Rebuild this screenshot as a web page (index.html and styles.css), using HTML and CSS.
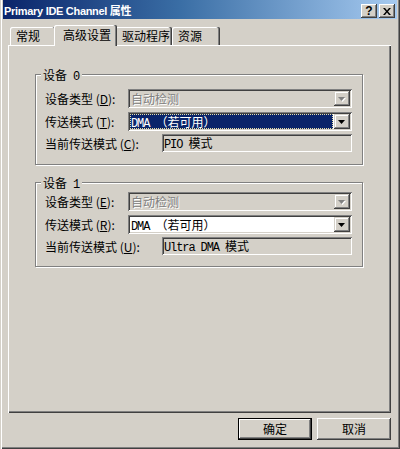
FILE: index.html
```html
<!DOCTYPE html>
<html lang="zh-CN">
<head>
<meta charset="utf-8">
<title>Primary IDE Channel 属性</title>
<link rel="stylesheet" href="styles.css">
</head>
<body>
<div class="window">
  <div class="titlebar">
    <span class="title">Primary IDE Channel 属性</span>
    <span class="tbtn help">?</span>
    <span class="tbtn close"><svg width="8" height="7" viewBox="0 0 8 7"><path d="M0 0h2l2 2.4L6 0h2L5 3.5 8 7H6L4 4.6 2 7H0l3-3.5z"/></svg></span>
  </div>
  <div class="client">
    <div class="tabs">
      <div class="tab t1">常规</div>
      <div class="tab t2 active">高级设置</div>
      <div class="tab t3">驱动程序</div>
      <div class="tab t4">资源</div>
    </div>
    <div class="panel">
      <div class="group g0">
        <div class="legend">设备<span class="m"> 0</span></div>
        <div class="row first">
          <span class="label">设备类型 (<u>D</u>):</span>
          <div class="combo disabled"><span class="val">自动检测</span><span class="drop"><svg width="8" height="5" viewBox="0 0 8 5"><path class="sh" d="M1 1h7L4.5 5z"/><path class="tri" d="M0 0h7L3.5 4z"/></svg></span></div>
        </div>
        <div class="row">
          <span class="label">传送模式 (<u>T</u>):</span>
          <div class="combo"><span class="val sel"><span class="m">DMA </span>（若可用）</span><span class="drop"><svg width="8" height="5" viewBox="0 0 8 5"><path class="tri" d="M0 0h7L3.5 4z"/></svg></span></div>
        </div>
        <div class="row srow">
          <span class="label wide">当前传送模式 (<u>C</u>):</span>
          <div class="static"><span class="m">PIO </span>模式</div>
        </div>
      </div>
      <div class="group g1">
        <div class="legend">设备<span class="m"> 1</span></div>
        <div class="row first">
          <span class="label">设备类型 (<u>E</u>):</span>
          <div class="combo disabled"><span class="val">自动检测</span><span class="drop"><svg width="8" height="5" viewBox="0 0 8 5"><path class="sh" d="M1 1h7L4.5 5z"/><path class="tri" d="M0 0h7L3.5 4z"/></svg></span></div>
        </div>
        <div class="row">
          <span class="label">传送模式 (<u>R</u>):</span>
          <div class="combo"><span class="val"><span class="m">DMA </span>（若可用）</span><span class="drop"><svg width="8" height="5" viewBox="0 0 8 5"><path class="tri" d="M0 0h7L3.5 4z"/></svg></span></div>
        </div>
        <div class="row srow">
          <span class="label wide">当前传送模式 (<u>U</u>):</span>
          <div class="static"><span class="m">Ultra DMA </span>模式</div>
        </div>
      </div>
    </div>
    <div class="buttons">
      <div class="btn default">确定</div>
      <div class="btn">取消</div>
    </div>
  </div>
</div>
</body>
</html>
```
FILE: styles.css
```css
* { box-sizing: border-box; }

body {
  margin: 0;
  background: #d4d0c8;
  font-family: "Noto Sans CJK SC", sans-serif;
  font-size: 12px;
  color: #000;
}

.window {
  width: 400px;
  height: 449px;
  padding: 0 3px 3px 3px;
  display: flex;
  flex-direction: column;
  box-shadow: inset 1px 0 #d4d0c8, inset 2px 0 #ffffff, inset -1px -1px #404040, inset -2px -2px #808080;
}

.titlebar {
  height: 19px;
  flex: none;
  display: flex;
  align-items: center;
  padding: 0 2px 0 1px;
  background: linear-gradient(90deg, #0a246a 0%, #3a6ea5 45%, #a6caf0 100%);
}

.title {
  flex: 1;
  color: #fff;
  font-family: "Liberation Sans", "Noto Sans CJK SC", sans-serif;
  font-weight: bold;
  font-size: 11px;
  letter-spacing: -0.3px;
  white-space: nowrap;
}

.tbtn {
  width: 16px;
  height: 14px;
  align-self: flex-end;
  margin-bottom: 1px;
  background: #d4d0c8;
  display: flex;
  align-items: center;
  justify-content: center;
  box-shadow: inset -1px -1px #404040, inset 1px 1px #ffffff, inset -2px -2px #808080;
}

.help {
  margin-right: 2px;
  font-family: "Liberation Sans", sans-serif;
  font-weight: bold;
  font-size: 12px;
  line-height: 14px;
  padding-bottom: 1px;
}

.close svg { display: block; fill: #000; }

.client {
  flex: 1;
  display: flex;
  flex-direction: column;
  padding: 6px 6px 0 5px;
}

.tabs {
  height: 20px;
  flex: none;
  display: flex;
  align-items: flex-end;
  padding-left: 2px;
}

.tab {
  height: 18px;
  line-height: 18px;
  padding-left: 6px;
  border-radius: 2px 2px 0 0;
  background: #d4d0c8;
  white-space: nowrap;
  box-shadow: inset -1px 0 #404040, inset -2px 0 #808080, inset 1px 1px #ffffff;
}

.t1 { width: 46px; }
.t2 { width: 63px; }
.t3 { width: 57px; padding-left: 7px; }
.t4 { width: 48px; }

.tab.active {
  height: 21px;
  line-height: 19px;
  padding-left: 9px;
  margin: 0 -2px -1px -2px;
  position: relative;
  z-index: 1;
}

.panel {
  height: 368px;
  flex: none;
  padding: 29px 28px 0 27px;
  box-shadow: inset 1px 1px #ffffff, inset -1px -1px #404040, inset -2px -2px #808080;
}

.group {
  border: 1px solid #808080;
  box-shadow: inset 1px 1px #ffffff, 1px 1px #ffffff;
}

.g0 { padding-bottom: 12px; }
.g1 { margin-top: 17px; padding-bottom: 11px; }

.legend {
  width: fit-content;
  height: 14px;
  line-height: 14px;
  margin: -7px 0 0 5px;
  padding: 0 3px 0 2px;
  background: #d4d0c8;
}

.row {
  display: flex;
  align-items: center;
  height: 19px;
  margin-top: 4px;
  padding-left: 9px;
}

.g0 .row.first { margin-top: 7px; }
.g1 .row.first { margin-top: 2px; }

.row.srow { height: 18px; margin-top: 3px; }

.label {
  width: 83px;
  flex: none;
  white-space: nowrap;
}

.label.wide { width: 117px; }

.combo {
  width: 224px;
  height: 19px;
  display: flex;
  padding: 2px;
  background: #fff;
  box-shadow: inset 1px 1px #808080, inset -1px -1px #ffffff, inset 2px 2px #404040, inset -2px -2px #d4d0c8;
}

.combo.disabled { background: #d4d0c8; }

.val {
  flex: 1;
  height: 15px;
  line-height: 15px;
  padding-left: 1px;
  white-space: nowrap;
}

.disabled .val {
  color: #808080;
  text-shadow: 1px 1px 0 #ffffff;
}

.val.sel {
  margin: 0 1px 0 0;
  background: #0a246a;
  color: #fff;
  outline: 1px dotted #e8e0a8;
  outline-offset: -1px;
}

.m {
  font-family: "Liberation Mono", monospace;
  font-size: 12px;
  letter-spacing: -1.1px;
  white-space: pre;
}

.drop {
  width: 16px;
  height: 15px;
  flex: none;
  display: flex;
  align-items: center;
  justify-content: center;
  background: #d4d0c8;
  box-shadow: inset -1px -1px #404040, inset 1px 1px #d4d0c8, inset -2px -2px #808080, inset 2px 2px #ffffff;
}

.drop svg { display: block; margin-top: 1px; }
.drop .tri { fill: #000; }
.drop .sh { fill: none; }
.disabled .drop .tri { fill: #808080; }
.disabled .drop .sh { fill: #ffffff; }

.static {
  width: 190px;
  height: 18px;
  line-height: 18px;
  padding-left: 2px;
  white-space: nowrap;
  background: #d4d0c8;
  box-shadow: inset 1px 1px #808080, inset -1px -1px #ffffff, inset 2px 2px #404040, inset -2px -2px #d4d0c8;
}

.buttons {
  display: flex;
  justify-content: flex-end;
  gap: 5px;
  margin-top: 5px;
}

.btn {
  width: 74px;
  height: 22px;
  line-height: 22px;
  text-align: center;
  background: #d4d0c8;
  box-shadow: inset -1px -1px #404040, inset 1px 1px #ffffff, inset -2px -2px #808080;
}

.btn.default {
  box-shadow: inset 0 0 0 1px #000000, inset -2px -2px #404040, inset 2px 2px #ffffff, inset -3px -3px #808080;
}
```
